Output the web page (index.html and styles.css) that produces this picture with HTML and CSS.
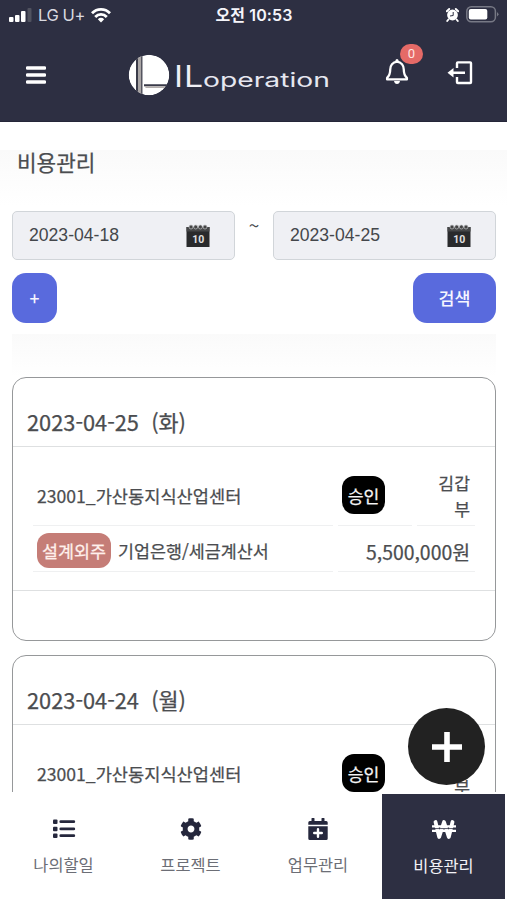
FILE: index.html
```html
<!DOCTYPE html>
<html lang="ko">
<head>
<meta charset="utf-8">
<title>비용관리</title>
<link rel="stylesheet" href="styles.css">
</head>
<body>
<div class="app">
  <header class="header">
    <div class="status">
      <div class="carrier">
        <svg class="signal" width="24" height="15" viewBox="0 0 24 15"><rect x="0" y="9" width="4.5" height="5" rx="1" fill="#fff"/><rect x="6" y="7" width="4.5" height="7" rx="1" fill="#fff"/><rect x="12" y="3" width="4.5" height="11" rx="1" fill="#fff"/><rect x="18.5" y="0" width="4" height="14" rx="1" fill="#50525f"/></svg>
        <span>LG U+</span>
        <svg class="wifi" width="20" height="15" viewBox="0 0 20 15"><g fill="none" stroke="#fff" stroke-width="2.8"><path d="M1 5.3C6 .1 14 .1 19 5.3"/><path d="M4.2 8.9C7.5 5.5 12.5 5.5 15.8 8.9"/></g><path d="M6.8 11.2Q10 8.4 13.2 11.2L10 14.5Z" fill="#fff"/></svg>
      </div>
      <div class="clock">오전 10:53</div>
      <div class="power">
        <svg width="13" height="14" viewBox="0 0 13 14"><circle cx="6.5" cy="7" r="5.4" fill="#fff"/><path d="M.8 3.3 3.2 1M9.8 1l2.4 2.3M2.4 11.5 1.2 13M10.6 11.5l1.2 1.5" stroke="#fff" stroke-width="1.9" stroke-linecap="round"/><path d="M7.2 4v3.5L4 8" fill="none" stroke="#2d2f42" stroke-width="1"/></svg>
        <svg width="33" height="17" viewBox="0 0 33 17"><rect x=".8" y=".8" width="28.6" height="15" rx="4.5" fill="none" stroke="#777985" stroke-width="1.5"/><rect x="2.8" y="3" width="18.5" height="10.5" rx="2" fill="#fff"/><path d="M31 6v4.5q3-2.2 0-4.5" fill="#777985"/></svg>
      </div>
    </div>
    <div class="bar">
      <svg class="menu" width="20" height="18" viewBox="0 0 20 18"><path d="M1.3 2h17.4M1.3 9h17.4M1.3 16h17.4" stroke="#fff" stroke-width="3.3" stroke-linecap="round"/></svg>
      <svg class="logo" width="204" height="44" viewBox="0 0 204 44">
        <defs><clipPath id="disc"><circle cx="21" cy="22" r="20.3"/></clipPath></defs>
        <g clip-path="url(#disc)"><circle cx="21" cy="22" r="20.3" fill="#fff"/><path d="M8 5v34h2V5z" fill="#3a3b49"/><path d="M10 3h3v38h-3z" fill="#a9a5a5"/><path d="M13 3h1.500v39H13z" fill="#555560"/><path d="M16 31.2h23v2H16z" fill="#393a49"/><path d="M16 33.2h21v1.700H18z" fill="#b3aead"/></g>
        <text class="logo-il" x="45.500" y="33.500" textLength="29" lengthAdjust="spacingAndGlyphs">IL</text>
        <text class="logo-rest" x="75" y="33.500" textLength="127" lengthAdjust="spacingAndGlyphs">operation</text>
      </svg>
      <div class="bell">
        <svg width="24" height="26" viewBox="0 0 24 26"><path d="M12 2.600C7.800 3.200 5.200 6.500 5.200 10.800c0 4.100-.9 6.100-3.100 8.100v1.500h19.800v-1.500c-2.200-2-3.100-4-3.100-8.100 0-4.300-2.600-7.600-6.800-8.200Z" fill="none" stroke="#fff" stroke-width="2.300" stroke-linejoin="round"/><path d="M12 1.500v1" stroke="#fff" stroke-width="3" stroke-linecap="round"/><path d="M9 22h6q-.5 3-3 3t-3-3" fill="#fff"/></svg>
        <span class="count">0</span>
      </div>
      <svg class="logout" width="26" height="24" viewBox="0 0 26 24"><path d="M10 7V2.200q0-.8.8-.8h12.400q.8 0 .8.8v19q0 .8-.8.8H10.800q-.8 0-.8-.8V16M5 11.800h13" fill="none" stroke="#fff" stroke-width="2.400"/><path d="M.5 11.800 6.500 7v9.600Z" fill="#fff"/></svg>
    </div>
  </header>

  <main class="content">
    <div class="title-band"><h1>비용관리</h1></div>
    <section class="filter">
      <div class="dates">
        <div class="date">2023-04-18<svg width="24" height="24" viewBox="0 0 24 24"><path d="M.5 3h23v20H.5z" fill="#292a2c"/><path d="M.5 3h23v4.500H.5z" fill="#464748"/><g fill="#444" stroke="#c1c3c6" stroke-width=".7"><circle cx="5" cy="3" r="2"/><circle cx="9.700" cy="3" r="2"/><circle cx="14.400" cy="3" r="2"/><circle cx="19" cy="3" r="2"/></g><text x="12.200" y="19" class="cal-day">10</text></svg></div>
        <span class="tilde">~</span>
        <div class="date">2023-04-25<svg width="24" height="24" viewBox="0 0 24 24"><path d="M.5 3h23v20H.5z" fill="#292a2c"/><path d="M.5 3h23v4.500H.5z" fill="#464748"/><g fill="#444" stroke="#c1c3c6" stroke-width=".7"><circle cx="5" cy="3" r="2"/><circle cx="9.700" cy="3" r="2"/><circle cx="14.400" cy="3" r="2"/><circle cx="19" cy="3" r="2"/></g><text x="12.200" y="19" class="cal-day">10</text></svg></div>
      </div>
      <div class="actions"><button class="add">+</button><button class="search">검색</button></div>
    </section>
    <div class="shade"></div>

    <article class="card">
      <h2>2023-04-25&nbsp; (화)</h2>
      <div class="details">
        <div class="row first"><div class="cell project">23001_가산동지식산업센터</div><div class="cell state"><span class="approved">승인</span></div><div class="cell person">김갑<br>부</div></div>
        <div class="row second"><div class="cell kind"><span class="tag">설계외주</span><span>기업은행/세금계산서</span></div><div class="cell amount">5,500,000원</div></div>
      </div>
    </article>
    <article class="card">
      <h2>2023-04-24&nbsp; (월)</h2>
      <div class="details">
        <div class="row first"><div class="cell project">23001_가산동지식산업센터</div><div class="cell state"><span class="approved">승인</span></div><div class="cell person">김갑<br>부</div></div>
      </div>
    </article>
  </main>

  <button class="fab" aria-label="추가"><svg width="30" height="30" viewBox="0 0 30 30"><path d="M15 0v30M0 15h30" stroke="#fff" stroke-width="5.600"/></svg></button>

  <nav class="tabs">
    <div class="tab"><svg width="24" height="22" viewBox="0 0 24 22"><g fill="#25273c"><rect x="1" y="1.500" width="4.500" height="4.500" rx="1"/><rect x="1" y="8.700" width="4.500" height="4.500" rx="1"/><rect x="1" y="15.500" width="4.500" height="4.500" rx="1"/></g><path d="M8.800 3.700h13M8.800 10.900h13M8.800 17.700h13" stroke="#25273c" stroke-width="2.800" stroke-linecap="round"/></svg><span>나의할일</span></div>
    <div class="tab"><svg width="22" height="22" viewBox="0 0 512 512"><path fill="#25273c" d="M487.400 315.700l-42.600-24.600c4.300-23.200 4.300-47 0-70.200l42.600-24.600c4.900-2.800 7.100-8.600 5.500-14-11.100-35.600-30-67.800-54.700-94.600-3.800-4.100-10-5.100-14.800-2.300L380.800 110c-17.900-15.400-38.500-27.300-60.800-35.100V25.800c0-5.600-3.900-10.500-9.400-11.700-36.700-8.200-74.300-7.800-109.200 0-5.500 1.200-9.400 6.100-9.400 11.700V75c-22.200 7.900-42.800 19.800-60.800 35.100L88.700 85.500c-4.900-2.800-11-1.900-14.800 2.300-24.700 26.700-43.600 58.900-54.700 94.600-1.700 5.400.6 11.200 5.500 14L67.300 221c-4.300 23.200-4.300 47 0 70.200l-42.600 24.600c-4.900 2.800-7.100 8.600-5.500 14 11.100 35.600 30 67.800 54.700 94.600 3.800 4.100 10 5.100 14.800 2.300l42.600-24.600c17.900 15.400 38.500 27.300 60.800 35.100v49.200c0 5.600 3.900 10.500 9.400 11.700 36.700 8.200 74.300 7.800 109.200 0 5.500-1.200 9.400-6.100 9.400-11.700v-49.200c22.200-7.900 42.800-19.800 60.800-35.100l42.600 24.600c4.900 2.800 11 1.900 14.800-2.300 24.700-26.700 43.600-58.900 54.700-94.600 1.500-5.500-.7-11.300-5.600-14.100zM256 336c-44.100 0-80-35.900-80-80s35.900-80 80-80 80 35.900 80 80-35.900 80-80 80z"/></svg><span>프로젝트</span></div>
    <div class="tab"><svg width="20" height="22" viewBox="0 0 20 22"><path d="M.3 4.500q0-1.500 1.500-1.500H3.500V.5q0-.5.5-.5h2q.5 0 .5.500V3h7V.5q0-.5.5-.5h2q.5 0 .5.500V3h1.700q1.500 0 1.500 1.500v2.300H.3ZM.3 8.200h19.400v12.300q0 1.500-1.500 1.500H1.800q-1.500 0-1.500-1.500Z" fill="#25273c"/><path d="M10 11.200v7.600M6.200 15h7.600" stroke="#fff" stroke-width="2.400" stroke-linecap="round"/></svg><span>업무관리</span></div>
    <div class="tab active"><svg width="26" height="22" viewBox="0 0 26 22"><path d="m4.500 4 3.700 15L13 4l4.800 15 3.700-15" fill="none" stroke="#fff" stroke-width="3.800" stroke-linejoin="round" stroke-linecap="round"/><path d="M1 8.300h24M1 12.800h24" stroke="#fff" stroke-width="2.200"/><path d="M3 10.550h20" stroke="#2d2f42" stroke-width=".8"/></svg><span>비용관리</span></div>
  </nav>
</div>
</body>
</html>
```

FILE: styles.css
```css
* { box-sizing: border-box; }
body {
  margin: 0;
  background: #fff;
  color: #4b4d50;
  font-family: "Noto Sans CJK KR", sans-serif;
  font-weight: 400;
}
h1, h2 { margin: 0; font-weight: 400; }
h1, h2, .cell { -webkit-text-stroke: .25px currentColor; }
svg { display: block; flex: none; }
button { border: 0; padding: 0; font: inherit; }
.app {
  position: relative;
  display: flex;
  flex-direction: column;
  width: 507px;
  height: 900px;
  overflow: hidden;
}

.header { height: 122px; flex: none; background: #2d2f42; color: #f5f5fa; border-bottom: 1px solid #252638; }
.status { display: grid; grid-template-columns: 1fr auto 1fr; height: 30px; align-items: center; padding: 0 8px 0 9px; }
.carrier { display: flex; align-items: center; font: 400 16.5px/30px Inter, sans-serif; color: #d9dae0; }
.carrier span { margin-left: 5px; width: 48px; white-space: nowrap; letter-spacing: -0.4px; }
.wifi { margin-left: 5px; }
.clock { font: 600 16px/30px Inter, "Noto Sans CJK KR", sans-serif; letter-spacing: .1px; white-space: nowrap; }
.power { display: flex; justify-content: flex-end; align-items: center; gap: 7px; margin: -1px 0 0; }
.bar { display: flex; align-items: center; height: 90px; padding-left: 26px; }
.logo { margin-left: 82px; }
.logo-il { font: 400 31px "Open Sans", sans-serif; fill: #f0f0f6; }
.logo-rest { font: 400 19px Inter, sans-serif; fill: #e6e7f0; }
.bell { position: relative; margin: -6px 0 0 53px; }
.count { position: absolute; left: 15px; top: -15px; width: 23px; height: 20px; border-radius: 10px; background: #e56a67; color: #ffe6e2; text-align: center; font: 400 13px/20px Roboto, sans-serif; }
.logout { margin: -5px 0 0 38px; }

.content { flex: 1; min-height: 0; overflow: hidden; padding: 28px 11px 0 12px; }
.title-band { height: 61px; margin: 0 -11px 0 -12px; padding-left: 17px; background: linear-gradient(#fafafa, #fff 55px); }
.title-band h1 { font-size: 21.3px; line-height: 24px; }
.dates { display: flex; justify-content: space-between; }
.date { display: flex; justify-content: space-between; align-items: center; width: 223px; height: 49px; padding: 0 25px 0 16px; border: 1px solid #d1d5d9; border-radius: 5px; background: #eff0f4; color: #44474b; font: 400 17.6px "Liberation Sans", sans-serif; }
.date svg { margin-right: -1px; }
.cal-day { fill: #e0e0e0; font: 700 10.5px Roboto, sans-serif; text-anchor: middle; }
.tilde { font-size: 19px; line-height: 27px; }
.actions { display: flex; justify-content: space-between; margin-top: 13px; }
.add, .search { height: 50px; border-radius: 14px; background: #596add; color: #f6f6ff; font-size: 17.4px; font-weight: 500; line-height: 48px; }
.add { width: 45px; }
.search { width: 83px; }
.shade { height: 43px; margin: 11px 0 0; background: linear-gradient(#fafafa, #fff); }

.card { height: 264px; margin-bottom: 14px; border: 1.5px solid #96989a; border-radius: 14px; overflow: hidden; }
.card h2 { height: 69px; padding: 28px 0 0 14px; border-bottom: 1.5px solid #dee0e1; font-size: 21.8px; line-height: 32px; white-space: pre; }
.details { height: 144px; padding: 19px 20px 0; border-bottom: 1.5px solid #dee0e1; }
.row { display: grid; gap: 5px; }
.cell { border-bottom: 1px solid #eff0f1; padding: 0 5px; white-space: nowrap; }
.first { grid-template-columns: 300px 74px 58px; }
.second { grid-template-columns: 300px 137px; }
.first .cell { height: 60px; }
.project { font-size: 17.6px; line-height: 59px; padding-left: 4px; }
.state { padding-top: 10px; padding-left: 4px; }
.approved { display: block; width: 43px; height: 38px; border-radius: 12px; background: #000; color: #f5f5f5; text-align: center; font-size: 17.2px; line-height: 39px; }
.person { text-align: right; font-size: 17.2px; line-height: 26px; padding-top: 4px; }
.second .cell { height: 46px; }
.kind { display: flex; align-items: center; gap: 7px; padding-left: 4px; font-size: 17.4px; padding-top: 4px; }
.tag { width: 74px; height: 35px; border-radius: 12px; background: #c57d77; color: #fff0ec; text-align: center; line-height: 36px; }
.amount { text-align: right; font-size: 19.4px; line-height: 51px; }

.fab { position: absolute; left: 408px; top: 708px; width: 77px; height: 77px; border-radius: 50%; background: #222; display: grid; place-items: center; }
.tabs { flex: none; display: grid; grid-template-columns: 127px 127px 128px 123px; height: 108px; padding-top: 2px; background: #fff; }
.tab { display: flex; flex-direction: column; align-items: center; height: 104px; padding-top: 24px; color: #6c6e76; font-size: 16.4px; font-weight: 400; line-height: 24px; }
.tab span { margin-top: 12px; }
.active { height: 105px; background: #2d2f42; color: #f2f2f7; }
.active span { margin-top: 13px; }
```
